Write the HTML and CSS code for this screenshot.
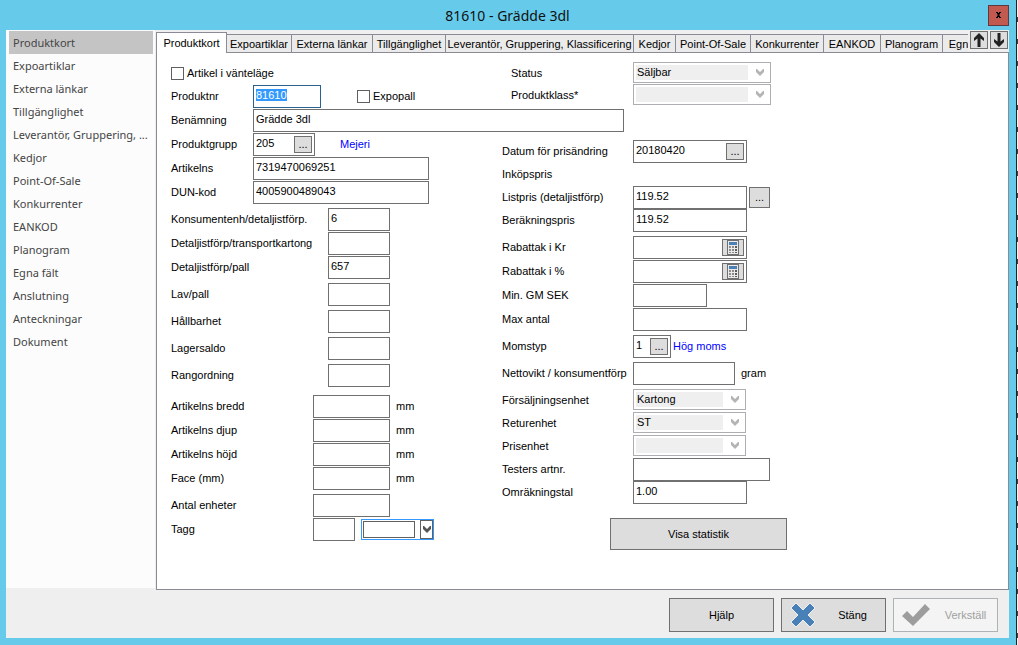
FILE: index.html
```html
<!DOCTYPE html>
<html lang="sv">
<head>
  <meta charset="UTF-8">
  <title>81610 - Grädde 3dl</title>
  <meta name="viewport" content="width=device-width, initial-scale=1">
  <link rel="stylesheet" href="styles.css">
</head>
<body>

  <!-- Ikoner -->
  <svg class="sprite" aria-hidden="true">
    <symbol id="chevron" viewBox="0 0 8 7">
      <path d="M0 0h1l3 3 3-3h1v3L4 7 0 3z"/>
    </symbol>
    <symbol id="calc" viewBox="0 0 12 15">
      <rect x="0.5" y="0.5" width="11" height="14" fill="#eaeaea" stroke="#6f6f6f"/>
      <path d="M2 2h8v3H2z" fill="#4a7fb8"/>
      <path d="M2 6h2v2H2zM5 6h2v2H5zM2 9h2v2H2zM5 9h2v2H5zM2 12h2v1H2zM5 12h2v1H5z" fill="#8c8c8c"/>
      <path d="M8 6h2v2H8zM8 9h2v2H8zM8 12h2v1H8z" fill="#5a5a5a"/>
    </symbol>
  </svg>

  <div class="window">
    <header class="titlebar">
      <h1>81610 - Grädde 3dl</h1>
      <button class="close" aria-label="Stäng fönster">
        <svg width="5" height="6" viewBox="0 0 5 6"><path d="M0 0h2v1h1V0h2v1H4v1H3.5v2H4v1h1v1H3V5H2v1H0V5h1V4h.5V2H1V1H0z" fill="#000"/></svg>
      </button>
    </header>

    <div class="main">
      <!-- Sidomeny -->
      <nav class="side">
        <a class="current" href="#">Produktkort</a>
        <a href="#">Expoartiklar</a>
        <a href="#">Externa länkar</a>
        <a href="#">Tillgänglighet</a>
        <a href="#">Leverantör, Gruppering, ...</a>
        <a href="#">Kedjor</a>
        <a href="#">Point-Of-Sale</a>
        <a href="#">Konkurrenter</a>
        <a href="#">EANKOD</a>
        <a href="#">Planogram</a>
        <a href="#">Egna fält</a>
        <a href="#">Anslutning</a>
        <a href="#">Anteckningar</a>
        <a href="#">Dokument</a>
      </nav>

      <div class="content">
        <!-- Flikar -->
        <div class="tabbar">
          <div class="tabs" role="tablist">
            <button class="tab active" role="tab">Produktkort</button>
            <button class="tab" role="tab">Expoartiklar</button>
            <button class="tab" role="tab">Externa länkar</button>
            <button class="tab" role="tab">Tillgänglighet</button>
            <button class="tab" role="tab">Leverantör, Gruppering, Klassificering</button>
            <button class="tab" role="tab">Kedjor</button>
            <button class="tab" role="tab">Point-Of-Sale</button>
            <button class="tab" role="tab">Konkurrenter</button>
            <button class="tab" role="tab">EANKOD</button>
            <button class="tab" role="tab">Planogram</button>
            <button class="tab" role="tab">Egna fält</button>
          </div>
          <button class="arrow" aria-label="Upp">
            <svg width="12" height="14" viewBox="0 0 12 14"><path d="M6 0l5 5v3L7.500 5.500V14h-3V5.500L1 8V5z" fill="#222"/></svg>
          </button>
          <button class="arrow" aria-label="Ner">
            <svg width="12" height="14" viewBox="0 0 12 14"><path d="M6 14l5-5V6L7.500 8.500V0h-3v8.500L1 6v3z" fill="#222"/></svg>
          </button>
        </div>

        <form class="panel" onsubmit="return false">
          <div class="columns">
            <div class="left">
              <div class="row">
                <input type="checkbox" id="wait"><label for="wait">Artikel i vänteläge</label>
              </div>
              <div class="row short">
                <label for="nr">Produktnr</label>
                <input class="w68" id="nr" value="81610">
                <input class="second" type="checkbox" id="expo"><label for="expo">Expopall</label>
              </div>
            </div>
            <div class="right indent">
              <div class="row low">
                <label for="status">Status</label>
                <div class="combo wide"><select id="status" disabled><option>Säljbar</option></select><svg><use href="#chevron"/></svg></div>
              </div>
              <div class="row low">
                <label for="klass">Produktklass*</label>
                <div class="combo wide"><select id="klass" disabled><option></option></select><svg><use href="#chevron"/></svg></div>
              </div>
            </div>
          </div>

          <div class="row short name">
            <label for="name">Benämning</label>
            <input class="w371" id="name" value="Grädde 3dl">
          </div>

          <div class="columns">
            <div class="left">
              <div class="group">
                <div class="row short">
                  <label for="grupp">Produktgrupp</label>
                  <div class="lookup w62"><input id="grupp" value="205"><button type="button">...</button></div>
                  <a class="info far" href="#">Mejeri</a>
                </div>
                <div class="row short"><label for="ns">Artikelns</label><input class="w176" id="ns" value="7319470069251"></div>
                <div class="row short"><label for="dun">DUN-kod</label><input class="w176" id="dun" value="4005900489043"></div>
              </div>

              <div class="group long">
                <div class="row"><label for="kd">Konsumentenh/detaljistförp.</label><input class="w62" id="kd" value="6"></div>
                <div class="row"><label for="dt">Detaljistförp/transportkartong</label><input class="w62" id="dt"></div>
                <div class="row"><label for="dp">Detaljistförp/pall</label><input class="w62" id="dp" value="657"></div>
              </div>

              <div class="group long airy">
                <div class="row"><label for="lav">Lav/pall</label><input class="w62" id="lav"></div>
                <div class="row"><label for="hall">Hållbarhet</label><input class="w62" id="hall"></div>
                <div class="row"><label for="saldo">Lagersaldo</label><input class="w62" id="saldo"></div>
                <div class="row"><label for="rang">Rangordning</label><input class="w62" id="rang"></div>
              </div>

              <div class="group size">
                <div class="row"><label for="bredd">Artikelns bredd</label><input class="w77" id="bredd"><span class="unit">mm</span></div>
                <div class="row"><label for="djup">Artikelns djup</label><input class="w77" id="djup"><span class="unit">mm</span></div>
                <div class="row"><label for="hojd">Artikelns höjd</label><input class="w77" id="hojd"><span class="unit">mm</span></div>
                <div class="row"><label for="face">Face (mm)</label><input class="w77" id="face"><span class="unit">mm</span></div>
              </div>

              <div class="group medium">
                <div class="row"><label for="antal">Antal enheter</label><input class="w77" id="antal"></div>
                <div class="row">
                  <label for="tagg">Tagg</label><input class="w42" id="tagg">
                  <div class="combo tagg"><select aria-label="Tagg"><option></option></select><span class="drop"><svg><use href="#chevron"/></svg></span></div>
                </div>
              </div>
            </div>

            <div class="right">
              <div class="group tight">
                <div class="row">
                  <label for="datum">Datum för prisändring</label>
                  <div class="lookup w114"><input id="datum" value="20180420"><button type="button">...</button></div>
                </div>
                <div class="row"><span class="caption">Inköpspris</span></div>
                <div class="row"><label for="list">Listpris (detaljistförp)</label><input class="w114" id="list" value="119.52"><button class="more" type="button">...</button></div>
                <div class="row"><label for="ber">Beräkningspris</label><input class="w114" id="ber" value="119.52"></div>
              </div>

              <div class="group">
                <div class="row">
                  <label for="rabkr">Rabattak i Kr</label>
                  <div class="lookup w114"><input id="rabkr"><button class="calc" type="button" aria-label="Räkna"><svg><use href="#calc"/></svg></button></div>
                </div>
                <div class="row">
                  <label for="rabp">Rabattak i %</label>
                  <div class="lookup w114"><input id="rabp"><button class="calc" type="button" aria-label="Räkna"><svg><use href="#calc"/></svg></button></div>
                </div>
                <div class="row"><label for="gm">Min. GM SEK</label><input class="w74" id="gm"></div>
                <div class="row"><label for="max">Max antal</label><input class="w114" id="max"></div>
              </div>

              <div class="group airy">
                <div class="row">
                  <label for="moms">Momstyp</label>
                  <div class="lookup w38"><input id="moms" value="1"><button type="button">...</button></div>
                  <a class="info" href="#">Hög moms</a>
                </div>
                <div class="row"><label for="netto">Nettovikt / konsumentförp</label><input class="w102" id="netto"><span class="unit">gram</span></div>
              </div>

              <div class="group tight">
                <div class="row">
                  <label for="fe">Försäljningsenhet</label>
                  <div class="combo"><select id="fe" disabled><option>Kartong</option></select><svg><use href="#chevron"/></svg></div>
                </div>
                <div class="row">
                  <label for="re">Returenhet</label>
                  <div class="combo"><select id="re" disabled><option>ST</option></select><svg><use href="#chevron"/></svg></div>
                </div>
                <div class="row">
                  <label for="pe">Prisenhet</label>
                  <div class="combo"><select id="pe" disabled><option></option></select><svg><use href="#chevron"/></svg></div>
                </div>
                <div class="row"><label for="test">Testers artnr.</label><input class="w137" id="test"></div>
                <div class="row"><label for="omr">Omräkningstal</label><input class="w114" id="omr" value="1.00"></div>
              </div>

              <button class="btn stats" type="button">Visa statistik</button>
            </div>
          </div>
        </form>
      </div>
    </div>

    <footer class="footer">
      <button class="btn">Hjälp</button>
      <button class="btn icon">
        <svg width="26" height="26" viewBox="0 0 26 26"><path d="M6 1l7 7 7-7 5 5-7 7 7 7-5 5-7-7-7 7-5-5 7-7-7-7z" fill="#4a80b8" stroke="#f0f0f0"/></svg>
        <span>Stäng</span>
      </button>
      <button class="btn icon" disabled>
        <svg width="28" height="24" viewBox="0 0 28 24"><path d="M0 13l5-5 6 6L23 1l5 5-17 17z" fill="#9d9d9d"/></svg>
        <span>Verkställ</span>
      </button>
    </footer>
  </div>

  <script>
    // Markera produktnumret vid start
    const nr = document.getElementById('nr');
    nr.focus();
    nr.select();
  </script>

</body>
</html>
```
FILE: styles.css
```css
* {
  box-sizing: border-box;
}

body {
  margin: 0;
  background: repeating-linear-gradient(#f0f0f0 0 17px, #3c3c4a 17px 22px);
  font: 11px "Liberation Sans", Arial, sans-serif;
  color: #000;
}

button, input, select {
  font: inherit;
  color: inherit;
  margin: 0;
  padding: 0;
  border-radius: 0;
}

a {
  text-decoration: none;
}

svg {
  display: block;
}

.sprite {
  display: none;
}

/* Fönster */
.window {
  display: flex;
  flex-direction: column;
  min-height: 100vh;
  margin-right: 1px;
  padding: 0 7px 7px 6px;
  background: #66cbea;
  border-right: 1px solid #222;
}

.titlebar {
  display: grid;
  grid-template-columns: 1fr auto 1fr;
  align-items: center;
  height: 30px;
}

.titlebar h1 {
  grid-column: 2;
  margin: 0;
  font: 14px "Noto Sans", sans-serif;
  color: #111;
}

.close {
  display: flex;
  align-items: center;
  justify-content: center;
  justify-self: end;
  width: 21px;
  height: 21px;
  background: #c35a50;
  border: 1px solid #5f3a3c;
}

.main {
  display: flex;
  flex: 1;
  background: #efefef;
}

/* Sidomeny */
.side {
  flex: 0 0 149px;
  margin: 0 1px 2px 0;
  padding: 1px 2px 0 3px;
  background: #fcfcfc;
}

.side a {
  display: block;
  padding-left: 4px;
  font: 11px/23px "Noto Sans", sans-serif;
  color: #444;
  white-space: nowrap;
}

.side .current {
  background: #c4c4c4;
}

/* Flikar */
.content {
  display: flex;
  flex-direction: column;
  flex: 1;
  min-width: 0;
}

.tabbar {
  display: flex;
  gap: 2px;
  height: 23px;
  margin-bottom: -1px;
  padding-right: 1px;
}

.tabs {
  position: relative;
  display: grid;
  grid-template-columns: 71px 65px 81px 73px 188px 42px 75px 73px 57px 62px 56px;
  align-items: end;
  flex: 1;
  min-width: 0;
  overflow: hidden;
}

.tab {
  height: 19px;
  background: #ebebeb;
  border: 1px solid #8b8b95;
  border-left: 0;
  white-space: nowrap;
}

.tab.active {
  height: 21px;
  background: #fff;
  border-left: 1px solid #8b8b95;
  border-bottom: 0;
}

.arrow {
  display: flex;
  align-items: center;
  justify-content: center;
  width: 18px;
  height: 18px;
  margin-top: 1px;
  background: #ddd;
  border: 1px solid #707070;
}

/* Formulär */
.panel {
  flex: 1;
  padding: 9px 14px;
  background: #fff;
  border: 1px solid #8b8b95;
}

.columns {
  display: flex;
}

.left {
  flex: 0 0 331px;
}

.right {
  flex: 1;
}

.panel > .columns:last-child .right {
  padding-top: 7px;
}

.row {
  display: flex;
  height: 23px;
  line-height: 23px;
  white-space: nowrap;
}

.row.low {
  height: 22px;
}

.row.name {
  margin: 1px 0;
}

.group {
  display: flex;
  flex-direction: column;
  gap: 1px;
  margin-bottom: 4px;
}

.group.airy {
  gap: 4px;
}

.group.tight {
  gap: 0;
}

.group.size {
  margin-top: 8px;
}

.short label:first-child {
  width: 82px;
}

.long label {
  width: 157px;
}

.size label,
.medium label {
  width: 142px;
}

.right label {
  width: 131px;
}

.indent {
  padding-left: 9px;
}

.right.indent label {
  width: 122px;
}

input:not([type]) {
  height: 23px;
  padding: 0 2px 4px;
  background: #fff;
  border: 1px solid #707070;
  line-height: 14px;
  outline: none;
}

input:not([type]):focus {
  border-color: #2a628f;
}

::selection {
  background: #3399ff;
  color: #fff;
}

input[type="checkbox"] {
  appearance: none;
  align-self: center;
  width: 13px;
  height: 13px;
  margin-right: 3px;
  background: #fff;
  border: 1px solid #606060;
}

input[type="checkbox"]:checked {
  background: #707070;
}

input.second {
  margin-left: 36px;
}

.w38 { width: 38px; }
.w42 { width: 42px; }
.w62 { width: 62px; }
.w68 { width: 68px; }
.w74 { width: 74px; }
.w77 { width: 77px; }
.w102 { width: 102px; }
.w114 { width: 114px; }
.w137 { width: 137px; }
.w176 { width: 176px; }
.w371 { width: 371px; }

.lookup {
  display: flex;
  align-items: center;
  padding-right: 2px;
  border: 1px solid #707070;
}

.lookup input:not([type]) {
  flex: 1;
  width: 0;
  height: 21px;
  border: 0;
}

.lookup button,
.more {
  display: flex;
  justify-content: center;
  width: 18px;
  height: 17px;
  line-height: 15px;
  background: #ddd;
  border: 1px solid #707070;
}

.lookup .calc {
  width: 22px;
}

.calc svg {
  width: 12px;
  height: 15px;
}

.more {
  width: 21px;
  height: 21px;
  margin: 1px 0 0 2px;
  line-height: 19px;
}

.info {
  margin-left: 2px;
  color: #00f;
}

.info.far {
  margin-left: 25px;
}

.unit {
  margin-left: 6px;
}

/* Listrutor */
.combo {
  display: flex;
  align-items: center;
  width: 113px;
  height: 21px;
  padding: 2px;
  border: 1px solid #adadb2;
}

.combo.wide {
  width: 138px;
}

.combo select {
  appearance: none;
  flex: 1;
  min-width: 0;
  height: 15px;
  padding-left: 1px;
  background: #efefef;
  border: 0;
  line-height: 15px;
  outline: none;
  color: #000;
  opacity: 1;
}

.combo svg {
  width: 8px;
  height: 7px;
  margin: 0 4px 0 8px;
  fill: #b4b4b4;
}

.combo.tagg {
  width: 73px;
  margin: 1px 0 0 6px;
  padding: 0 0 0 1px;
  border-color: #3399ff;
}

.combo.tagg select {
  height: 17px;
  background: #fff;
  border: 1px solid #606060;
}

.drop {
  display: flex;
  align-items: center;
  justify-content: center;
  width: 13px;
  height: 19px;
  margin-left: 5px;
  border: 1px solid #606060;
}

.combo .drop svg {
  margin: 0;
  fill: #555;
}

/* Knappar */
.btn {
  width: 105px;
  height: 34px;
  background: #ddd;
  border: 1px solid #707070;
}

.btn:disabled {
  background: #f4f4f4;
  border-color: #adb2b5;
  color: #a0a0a0;
}

.btn.stats {
  width: 177px;
  height: 32px;
  margin: 10px 0 0 108px;
}

.btn.icon {
  display: flex;
  align-items: center;
  padding: 0 8px;
}

.btn.icon span {
  flex: 1;
  padding-left: 12px;
  text-align: center;
}

.footer {
  display: flex;
  justify-content: flex-end;
  gap: 7px;
  padding: 8px 11px 6px;
  background: #efefef;
}
```
